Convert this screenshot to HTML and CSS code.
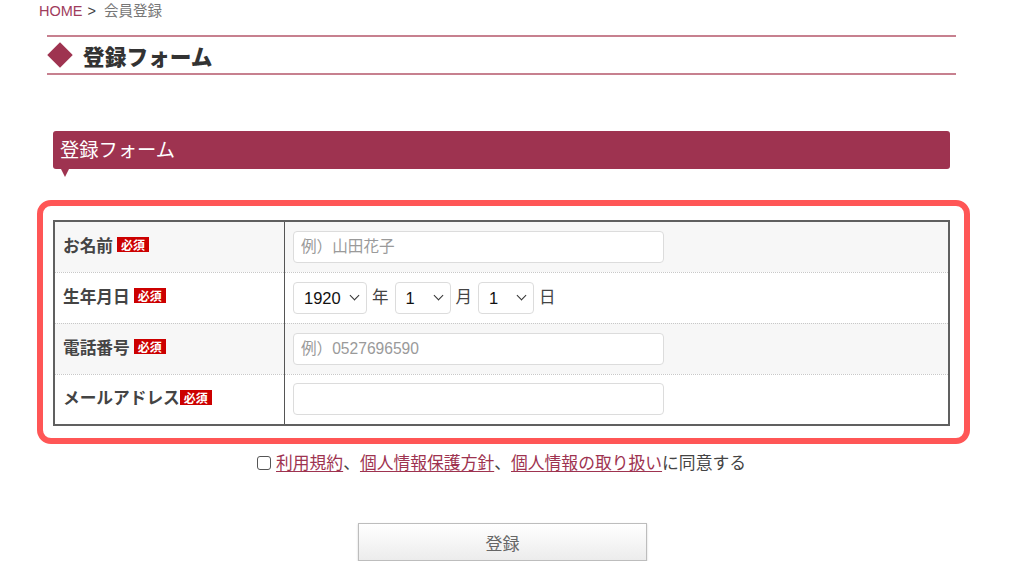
FILE: index.html
```html
<!DOCTYPE html>
<html lang="ja">
<head>
<meta charset="utf-8">
<title>会員登録</title>
<link rel="stylesheet" href="styles.css">
</head>
<body>
<div class="breadcrumb"><a class="crumb-home" href="#">HOME</a><span class="crumb-sep">&gt;</span><span class="crumb-current">会員登録</span></div>
<main class="page">
  <h1 class="page-title"><span class="diamond"></span><span class="page-title-text">登録フォーム</span></h1>
  <h2 class="banner">登録フォーム</h2>
  <div class="form-wrap">
    <table class="form-table">
      <tr class="row-alt">
        <th><span class="label">お名前</span><span class="req">必須</span></th>
        <td><input class="text-input" type="text" placeholder="例）山田花子"></td>
      </tr>
      <tr>
        <th><span class="label">生年月日</span><span class="req">必須</span></th>
        <td>
          <div class="date-row">
            <span class="sel-wrap"><select class="sel sel-year"><option>1920</option></select></span><span class="unit">年</span>
            <span class="sel-wrap"><select class="sel sel-small"><option>1</option></select></span><span class="unit">月</span>
            <span class="sel-wrap"><select class="sel sel-small"><option>1</option></select></span><span class="unit">日</span>
          </div>
        </td>
      </tr>
      <tr class="row-alt">
        <th><span class="label">電話番号</span><span class="req">必須</span></th>
        <td><input class="text-input" type="text" placeholder="例）0527696590"></td>
      </tr>
      <tr>
        <th><span class="label">メールアドレス</span><span class="req req-tight">必須</span></th>
        <td><input class="text-input" type="text"></td>
      </tr>
    </table>
    <div class="highlight"></div>
  </div>
  <div class="agree">
    <span class="agree-check"></span><span><a href="#">利用規約</a>、<a href="#">個人情報保護方針</a>、<a href="#">個人情報の取り扱い</a>に同意する</span>
  </div>
  <div class="submit-row"><button class="submit" type="button">登録</button></div>
</main>
</body>
</html>
```
FILE: styles.css
```css
html, body {
  margin: 0;
  padding: 0;
  background: #fff;
}
body {
  font-family: "Liberation Sans", "Noto Sans CJK JP", sans-serif;
  color: #333;
}
a {
  color: #9e3350;
}
.breadcrumb {
  padding: 2px 0 0 39px;
  font-size: 14.5px;
  line-height: 19px;
  height: 21px;
}
.crumb-home {
  color: #a03c5c;
  text-decoration: none;
}
.crumb-sep {
  color: #444;
  margin: 0 8px 0 5px;
}
.crumb-current {
  color: #777;
}
.page {
  margin-left: 47px;
  width: 909px;
}
.page-title {
  margin: 12px 0 0;
  height: 36px;
  border-top: 2px solid #c7808f;
  border-bottom: 2px solid #c7808f;
  display: flex;
  align-items: center;
  font-size: 21.7px;
  font-weight: 900;
  color: #333;
}
.diamond {
  width: 18px;
  height: 18px;
  background: #9e3350;
  transform: rotate(45deg);
  margin: 0 0 0 4px;
}
.page-title-text {
  margin-left: 14px;
  font-family: "Noto Sans CJK JP", sans-serif;
}
.banner {
  position: relative;
  margin: 56px 0 0 6px;
  width: 890px;
  height: 38px;
  padding-left: 7px;
  background: #9e3350;
  border-radius: 3px;
  color: #fff;
  font-size: 19.3px;
  font-weight: normal;
  line-height: 36px;
  font-family: "Noto Sans CJK JP", sans-serif;
}
.banner::after {
  content: "";
  position: absolute;
  left: 8px;
  top: 38px;
  border-left: 4px solid transparent;
  border-right: 4px solid transparent;
  border-top: 8px solid #9e3350;
}
.form-wrap {
  position: relative;
  margin: 51px 0 0 6px;
  width: 897px;
}
.form-table {
  width: 897px;
  border-collapse: collapse;
  border: 2px solid #606060;
}
.form-table tr {
  height: 51px;
  background: #fff;
}
.form-table tr.row-alt {
  background: #f7f7f7;
}
.form-table tr + tr th,
.form-table tr + tr td {
  border-top: 1px dotted #c8c8c8;
}
.form-table th {
  width: 221px;
  padding: 0 0 4px 8px;
  text-align: left;
  vertical-align: middle;
  border-right: 1.5px solid #555;
  white-space: nowrap;
}
.form-table td {
  padding: 0 0 0 8px;
  vertical-align: middle;
}
.label {
  font-size: 16.7px;
  font-weight: bold;
  color: #444;
  font-family: "Noto Sans CJK JP", sans-serif;
  vertical-align: middle;
}
.req {
  display: inline-block;
  vertical-align: middle;
  margin-left: 4px;
  width: 32px;
  height: 15px;
  line-height: 15px;
  background: #cc0000;
  color: #fff;
  font-size: 12px;
  text-align: center;
  font-family: "Noto Sans CJK JP", sans-serif;
}
.req-tight {
  margin-left: 0;
}
.text-input {
  box-sizing: border-box;
  width: 371px;
  height: 32px;
  margin: 0;
  padding: 0 7px;
  border: 1px solid #dcdcdc;
  border-radius: 4px;
  background: #fff;
  font-size: 15.6px;
  font-family: "Liberation Sans", "Noto Sans CJK JP", sans-serif;
  color: #333;
  display: block;
}
.text-input::placeholder {
  color: #9a9a9a;
}
.date-row {
  display: flex;
  align-items: center;
}
.sel-wrap {
  position: relative;
  display: block;
}
.sel-wrap::after {
  content: "";
  position: absolute;
  right: 9px;
  top: 10px;
  width: 6px;
  height: 6px;
  border-right: 1.5px solid #333;
  border-bottom: 1.5px solid #333;
  transform: rotate(45deg);
  pointer-events: none;
}
.sel {
  -webkit-appearance: none;
  appearance: none;
  box-sizing: border-box;
  display: block;
  height: 32px;
  margin: 0;
  padding: 0 4px 0 10px;
  border: 1px solid #dcdcdc;
  border-radius: 4px;
  background-color: #fff;
  font-size: 16.5px;
  font-family: "Liberation Sans", sans-serif;
  color: #111;
}
.sel-year {
  width: 74px;
}
.sel-small {
  width: 56px;
}
.unit {
  margin: 0 6px 0 5px;
  font-size: 16.5px;
  color: #444;
  font-family: "Noto Sans CJK JP", sans-serif;
  padding-bottom: 3px;
}
.highlight {
  position: absolute;
  left: -16px;
  top: -20px;
  right: -20px;
  bottom: -18px;
  border: 6px solid #ff5656;
  border-radius: 14px;
  pointer-events: none;
}
.agree {
  margin-top: 24px;
  display: flex;
  justify-content: center;
  align-items: center;
  font-size: 16.8px;
  line-height: 24px;
  color: #444;
  font-family: "Noto Sans CJK JP", sans-serif;
}
.agree-check {
  box-sizing: border-box;
  width: 14px;
  height: 14px;
  margin: 2px 5px 0 0;
  border: 1.5px solid #555;
  border-radius: 3px;
  background: #fff;
}
.agree a {
  color: #9e3350;
  text-decoration: underline;
  text-underline-offset: 2px;
}
.submit-row {
  display: flex;
  justify-content: center;
  margin-top: 49px;
}
.submit {
  width: 289px;
  height: 38px;
  border: 1px solid #bdbdbd;
  background: linear-gradient(#ffffff, #ececec);
  box-shadow: 0 1px 2px rgba(0, 0, 0, 0.18);
  color: #666;
  font-size: 17px;
  font-family: "Noto Sans CJK JP", sans-serif;
  margin-left: 2px;
}
```
